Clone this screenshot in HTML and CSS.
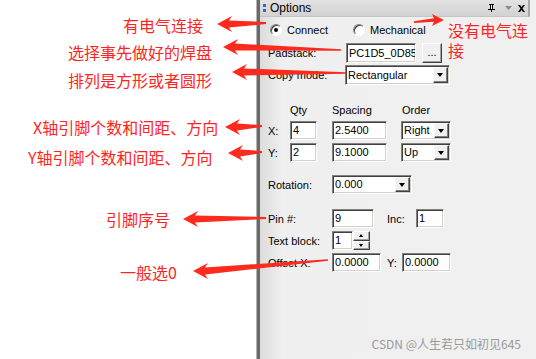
FILE: index.html
```html
<!DOCTYPE html>
<html lang="en">
<head>
    <meta charset="UTF-8">
    <title>Options</title>
    <link rel="stylesheet" href="styles.css">
</head>
<body>
    <div class="page">
        <div class="notes-col"></div>

        <div class="panel">
            <div class="titlebar">
                <span class="grip"><i></i><i></i></span>
                <span class="title">Options</span>
                <span class="tb-btns">
                    <svg class="pin" width="7" height="8" viewBox="0 0 7 8"><path d="M1 0h5v1H5v4h2v1H4v2H3V6H0V5h2V1H1z" fill="#000"/><path d="M3 1h1v4H3z" fill="#fff"/></svg>
                    <svg class="menu" width="7" height="4" viewBox="0 0 7 4"><path d="M0 0h7L3.5 4z" fill="#8a8a8a"/></svg>
                    <svg class="close" width="7" height="7" viewBox="0 0 7 7"><path d="M0 0h2l1.5 2L5 0h2L4.5 3.5 7 7H5L3.5 5 2 7H0l2.5-3.5z" fill="#000"/></svg>
                </span>
            </div>

            <div class="panel-body">
                <div class="row radio-row">
                    <label class="radio-item first"><span class="radio checked"></span>Connect</label>
                    <label class="radio-item"><span class="radio"></span>Mechanical</label>
                </div>

                <div class="row tall">
                    <span class="lbl w78">Padstack:</span>
                    <span class="field w70">PC1D5_0D85</span>
                    <span class="btn dots">...</span>
                </div>

                <div class="row tall gap2">
                    <span class="lbl w77">Copy mode:</span>
                    <span class="field combo w105">Rectangular<span class="drop"></span></span>
                </div>

                <div class="row head">
                    <span class="lbl w22"></span>
                    <span class="lbl w42">Qty</span>
                    <span class="lbl w70">Spacing</span>
                    <span class="lbl">Order</span>
                </div>

                <div class="row">
                    <span class="lbl w22">X:</span>
                    <span class="field w27">4</span>
                    <span class="field w55 ml15">2.5400</span>
                    <span class="field combo w50 ml14">Right<span class="drop"></span></span>
                </div>

                <div class="row gap3">
                    <span class="lbl w22">Y:</span>
                    <span class="field w27">2</span>
                    <span class="field w55 ml15">9.1000</span>
                    <span class="field combo w50 ml14">Up<span class="drop"></span></span>
                </div>

                <div class="row rot">
                    <span class="lbl w64">Rotation:</span>
                    <span class="field combo w80">0.000<span class="drop"></span></span>
                </div>

                <div class="row pin-row">
                    <span class="lbl w64">Pin #:</span>
                    <span class="field w42">9</span>
                    <span class="lbl w29 ml13">Inc:</span>
                    <span class="field w28">1</span>
                </div>

                <div class="row gap3">
                    <span class="lbl w64">Text block:</span>
                    <span class="field w21">1</span>
                    <span class="spin"><span class="spin-up"></span><span class="spin-down"></span></span>
                </div>

                <div class="row gap3">
                    <span class="lbl w64">Offset X:</span>
                    <span class="field w49">0.0000</span>
                    <span class="lbl w15 ml6">Y:</span>
                    <span class="field w49">0.0000</span>
                </div>
            </div>

            <div class="watermark">CSDN @人生若只如初见645</div>
        </div>

        <!-- red callouts drawn over the screenshot -->
        <div class="overlay">
            <span class="note n1">有电气连接</span>
            <span class="note n2">选择事先做好的焊盘</span>
            <span class="note n3">排列是方形或者圆形</span>
            <span class="note n4">X轴引脚个数和间距、方向</span>
            <span class="note n5">Y轴引脚个数和间距、方向</span>
            <span class="note n6">引脚序号</span>
            <span class="note n7">一般选0</span>
            <span class="note n8">没有电气连接</span>

            <svg class="arrows" width="536" height="359" viewBox="0 0 536 359">
                <g fill="#fe2a1e">
                    <polygon points="217,24 232,16 229,20.5 266,22 266,24 229,27.5 232,32"/>
                    <polygon points="223,47 238,39 235,43.5 341,49.3 341,50.8 235,50.5 238,55"/>
                    <polygon points="232,72 247,64 244,68.5 346,72.3 346,73.8 244,75.5 247,80"/>
                    <polygon points="225,127 240,119 237,123.5 262,125 262,127 237,130.5 240,135"/>
                    <polygon points="228,153 243,145 240,149.5 262,151 262,153 240,156.5 243,161"/>
                    <polygon points="183,219 198,211 195,215.5 266,217 266,219 195,222.5 198,227"/>
                    <polygon points="193,271 208,263 205,267.5 328,259.3 328,260.8 205,274.5 208,279"/>
                    <polygon points="444,20 432,14 434,18.3 414,21.3 414,23 434,21.8 432,26"/>
                </g>
            </svg>
        </div>
    </div>
</body>
</html>
```

FILE: styles.css
```css
body {
    margin: 0;
    background-color: #fff;
    font-family: "Liberation Sans", Arial, sans-serif;
    font-size: 11px;
    color: #000;
}

.page {
    position: relative;
    display: flex;
    width: 536px;
    height: 359px;
    overflow: hidden;
}

.notes-col {
    width: 257px;
    flex: none;
    background-color: #fff;
}

/* docked panel */
.panel {
    flex: 1;
    display: flex;
    flex-direction: column;
    border-left: 3px solid #6a6a6a;
    box-shadow: -1px 0 0 #b4b4b4;
    background: linear-gradient(to right, #dcdcdc 0, #efefef 22px, #f0f0f0 100%);
}

.titlebar {
    display: flex;
    align-items: center;
    height: 16px;
    margin-right: 6px;
    border-right: 2px solid #a8a8a8;
    border-bottom: 1px solid #c4c4c4;
    background: linear-gradient(#e2e2e2, #d2d2d2);
}

.grip {
    display: flex;
    flex-direction: column;
    gap: 2px;
    margin-left: 3px;
}

.grip i {
    display: block;
    width: 3px;
    height: 3px;
    background-color: #2f66d4;
}

.title {
    margin-left: 4px;
    font-size: 12px;
}

.tb-btns {
    display: flex;
    align-items: center;
    margin-left: auto;
    margin-right: 3px;
}

.pin { margin-right: 10px; }
.menu { margin-right: 6px; }

.panel-body {
    padding: 5px 0 0 8px;
}

.row {
    display: flex;
    align-items: center;
    height: 19px;
    white-space: nowrap;
}

.row.tall { height: 20px; }
.gap2 { margin-top: 2px; }
.gap3 { margin-top: 3px; }

.radio-row {
    height: 16px;
    margin-bottom: 5px;
}

.radio-item {
    display: flex;
    align-items: center;
    gap: 5px;
}

.radio-item.first {
    width: 83px;
    margin-left: 2px;
}

.radio {
    position: relative;
    box-sizing: border-box;
    width: 12px;
    height: 12px;
    border-radius: 50%;
    border: 1px solid;
    border-color: #808080 #fff #fff #808080;
    background-color: #fff;
    box-shadow: inset 1px 1px 0 #404040;
}

.radio.checked::after {
    content: "";
    position: absolute;
    left: 3px;
    top: 3px;
    width: 4px;
    height: 4px;
    border-radius: 50%;
    background-color: #000;
}

.head {
    height: 14px;
    margin-top: 18px;
    margin-bottom: 4px;
}

.rot { margin-top: 13px; }
.pin-row { margin-top: 15px; }

.lbl { display: inline-block; }

.w15 { width: 15px; }
.w21 { width: 21px; }
.w22 { width: 22px; }
.w27 { width: 27px; }
.w28 { width: 28px; }
.w29 { width: 29px; }
.w42 { width: 42px; }
.w49 { width: 49px; }
.w50 { width: 50px; }
.w55 { width: 55px; }
.w64 { width: 64px; }
.w70 { width: 70px; }
.w77 { width: 77px; }
.w78 { width: 78px; }
.w80 { width: 80px; }
.w105 { width: 105px; }

.ml6 { margin-left: 6px; }
.ml13 { margin-left: 13px; }
.ml14 { margin-left: 14px; }
.ml15 { margin-left: 15px; }

/* sunken edit box */
.field {
    position: relative;
    box-sizing: border-box;
    height: 19px;
    padding: 0 2px;
    overflow: hidden;
    line-height: 17px;
    font-size: 11px;
    background-color: #fff;
    border: 1px solid;
    border-color: #808080 #fff #fff #808080;
    box-shadow: inset 1px 1px 0 #404040, inset -1px -1px 0 #d4d0c8;
}

.tall .field { height: 20px; line-height: 18px; }

.combo .drop {
    position: absolute;
    top: 1px;
    right: 1px;
    bottom: 1px;
    width: 15px;
    box-sizing: border-box;
    background-color: #f0f0f0;
    border: 1px solid;
    border-color: #f8f8f8 #404040 #404040 #f8f8f8;
    box-shadow: inset -1px -1px 0 #808080;
}

.combo .drop::after {
    content: "";
    position: absolute;
    left: 3px;
    top: 50%;
    margin-top: -2px;
    border-left: 3.5px solid transparent;
    border-right: 3.5px solid transparent;
    border-top: 4px solid #000;
}

.btn {
    box-sizing: border-box;
    text-align: center;
    background-color: #f0f0f0;
    border: 1px solid;
    border-color: #fff #404040 #404040 #fff;
    box-shadow: inset -1px -1px 0 #a0a0a0;
}

.dots {
    width: 20px;
    height: 20px;
    margin-left: 6px;
    line-height: 17px;
}

.spin {
    display: flex;
    flex-direction: column;
    width: 17px;
    height: 19px;
}

.spin-up,
.spin-down {
    position: relative;
    flex: 1;
    box-sizing: border-box;
    background-color: #f0f0f0;
    border: 1px solid;
    border-color: #fff #404040 #404040 #fff;
    box-shadow: inset -1px -1px 0 #a0a0a0;
}

.spin-up::after,
.spin-down::after {
    content: "";
    position: absolute;
    left: 5px;
    top: 2px;
    border-left: 2.5px solid transparent;
    border-right: 2.5px solid transparent;
}

.spin-up::after { border-bottom: 3px solid #000; }
.spin-down::after { border-top: 3px solid #000; }

.watermark {
    margin-top: auto;
    padding: 0 15px 7px 0;
    text-align: right;
    font-family: "Noto Sans CJK SC", sans-serif;
    font-size: 12px;
    line-height: 16px;
    color: #9a9a9a;
}

/* callouts */
.overlay {
    position: absolute;
    left: 0;
    top: 0;
    width: 536px;
    height: 359px;
    pointer-events: none;
}

.arrows {
    position: absolute;
    left: 0;
    top: 0;
}

.note {
    position: absolute;
    font-family: "Noto Sans CJK SC", sans-serif;
    font-size: 16px;
    line-height: 20px;
    color: #ff2424;
    white-space: nowrap;
}

.n1 { left: 123px; top: 15px; }
.n2 { left: 68px; top: 42px; }
.n3 { left: 68px; top: 70px; }
.n4 { left: 33px; top: 117px; }
.n5 { left: 28px; top: 147px; }
.n6 { left: 106px; top: 209px; }
.n7 { left: 120px; top: 262px; }
.n8 {
    left: 448px;
    top: 20px;
    width: 82px;
    white-space: normal;
}
```
